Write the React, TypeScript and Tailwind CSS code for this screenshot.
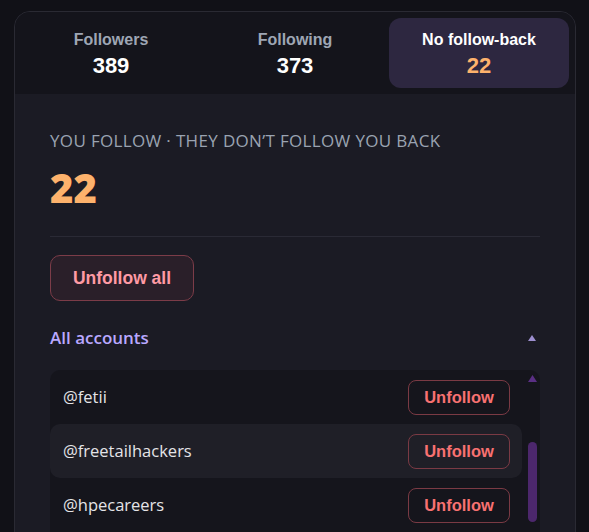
import React from 'react';

const tabs = [
  { label: 'Followers', value: 389 },
  { label: 'Following', value: 373 },
  { label: 'No follow-back', value: 22, active: true },
];

const accounts = ['fetii', 'freetailhackers', 'hpecareers', 'hacktx', 'ibm', 'jpmorgan'];

export default function App() {
  return (
    <div className="min-h-screen bg-[#111117] pt-[11px] pl-[14px] pr-[13px] font-['Liberation_Sans',Arial,sans-serif]">
      <div className="rounded-2xl border border-[#2a2a33] bg-[#1b1b24] overflow-hidden">
        {/* tabs */}
        <div className="grid grid-cols-3 gap-1 bg-[#14141b] p-1.5">
          {tabs.map(t => (
            <div
              key={t.label}
              className={`h-[70px] rounded-xl flex flex-col items-center justify-center gap-1 pt-0.5 ${t.active ? 'bg-[#2d2740]' : ''}`}
            >
              <span className={`text-base font-bold leading-5 ${t.active ? 'text-white' : 'text-[#9ea6b4]'}`}>{t.label}</span>
              <span className={`text-[22px] font-bold leading-6 ${t.active ? 'text-[#fdb26c]' : 'text-white'}`}>{t.value}</span>
            </div>
          ))}
        </div>

        <div className="px-[35px] pt-[35px]">
          <div className="font-['Open_Sans',sans-serif] text-[17px] leading-6 font-medium tracking-[0.02em] text-[#9aa3b1] uppercase">
            You follow · they don’t follow you back
          </div>
          <div className="mt-[15px] font-['Open_Sans',sans-serif] text-[40px] leading-none font-extrabold text-[#fdb26c]">22</div>

          <div className="mt-7 h-px bg-[#2a2a35]" />

          <button className="mt-[18px] h-[46px] w-[144px] rounded-[10px] border border-[#7c3c48] bg-[#2a1f29] text-[17.5px] font-bold text-[#ff9aa4]">
            Unfollow all
          </button>

          <div className="mt-[25px] flex items-center justify-between">
            <span className="font-['Open_Sans',sans-serif] text-[17px] leading-6 font-semibold text-[#b9a8ff]">All accounts</span>
            <svg width="8" height="6" viewBox="0 0 8 6" className="mr-1">
              <path d="M4 0 L8 6 L0 6 Z" fill="#9d8fcf" />
            </svg>
          </div>

          <div className="mt-5 h-[320px] overflow-hidden rounded-[10px] bg-[#15151c] flex">
            <div className="flex-1">
              {accounts.map((a, i) => (
                <div
                  key={a}
                  className={`h-[54px] pl-[13px] pr-3 flex items-center justify-between rounded-[10px] ${i % 2 === 1 ? 'bg-[#1f1f27]' : ''}`}
                >
                  <span className="font-['Open_Sans',sans-serif] text-[16.5px] text-[#e4e4e7]">@{a}</span>
                  <button className="h-[35px] w-[102px] rounded-lg border border-[#7a3a44] text-[16.5px] font-bold text-[#f87171]">
                    Unfollow
                  </button>
                </div>
              ))}
            </div>
            {/* scrollbar */}
            <div className="w-[18px] flex flex-col items-center pt-[5px] pl-[2px]">
              <svg width="9" height="7" viewBox="0 0 9 7">
                <path d="M4.5 0 L9 7 L0 7 Z" fill="#5a2f84" />
              </svg>
              <div className="mt-[60px] h-[80px] w-[9px] rounded-full bg-[#4c276c]" />
            </div>
          </div>
        </div>
      </div>
    </div>
  );
}
